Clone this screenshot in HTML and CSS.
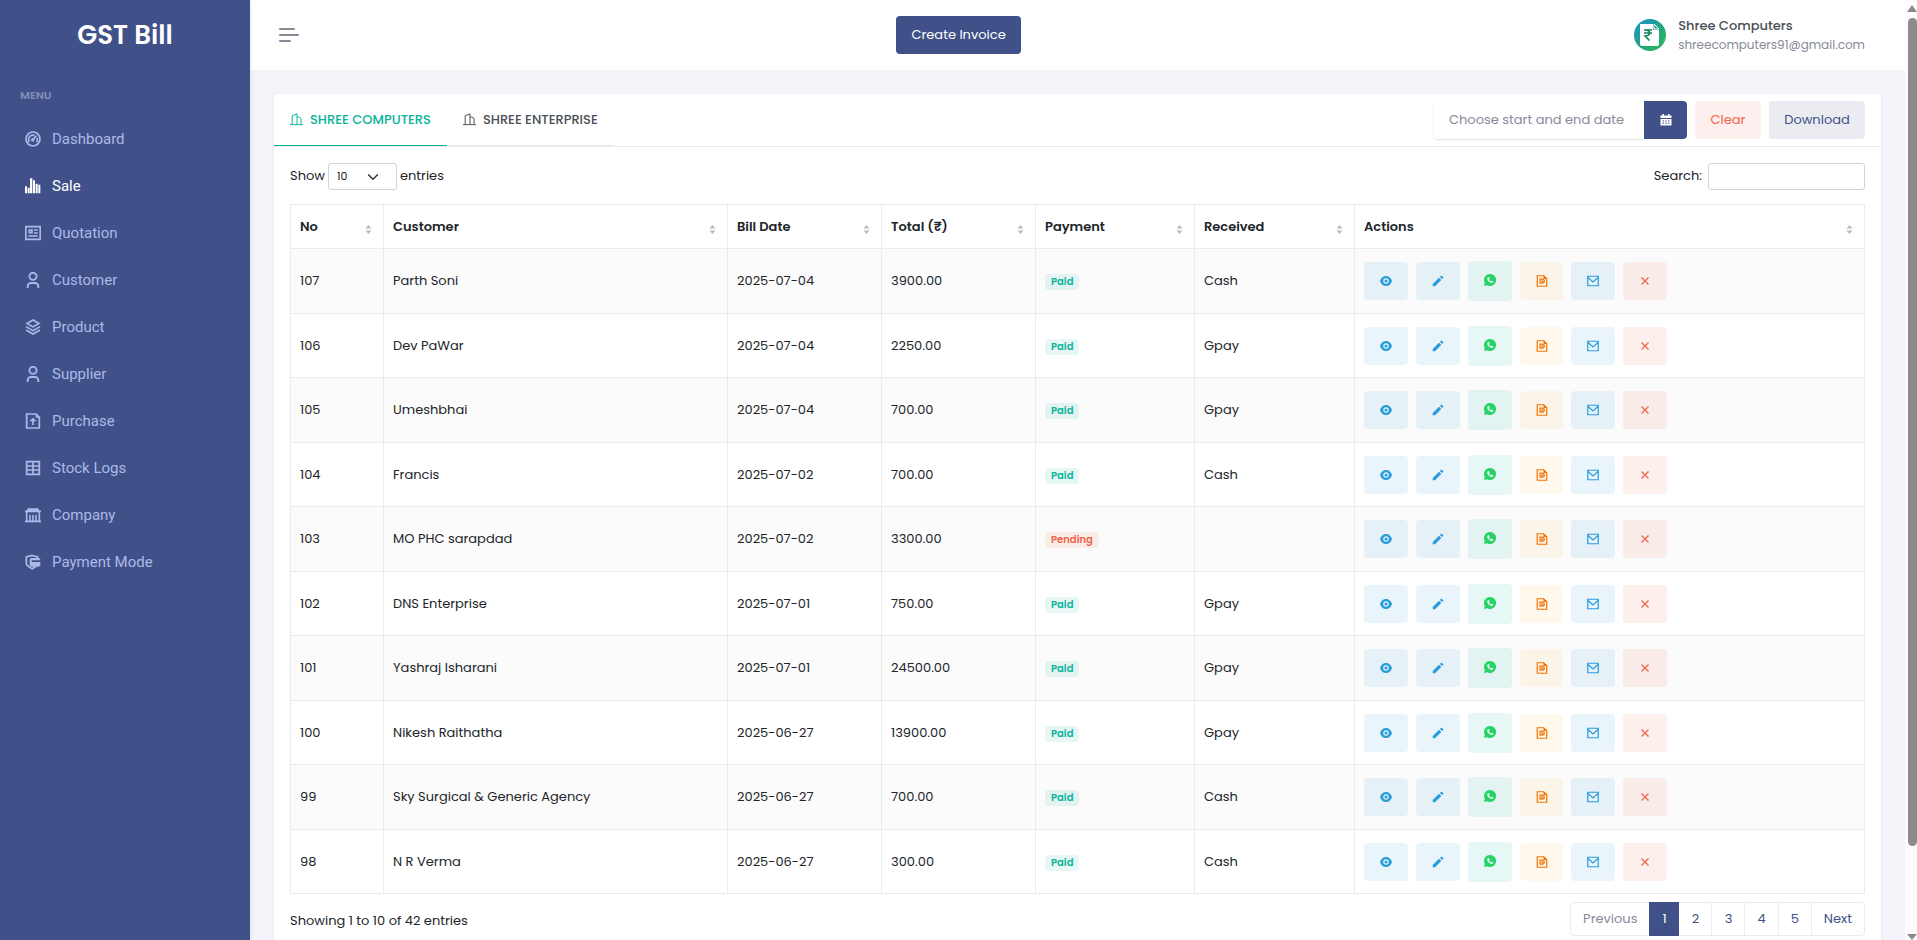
FILE: index.html
```html
<!DOCTYPE html>
<html lang="en">
<head>
    <meta charset="UTF-8">
    <title>GST Bill</title>
    <link rel="stylesheet" href="styles.css">
</head>
<body>
    <!-- icons -->
    <svg class="sprite">
        <symbol id="dashboard" viewBox="0 0 24 24"><g fill="none" stroke="currentColor" stroke-width="2.600"><circle cx="12" cy="12" r="10.500"/><path d="M6.500 16.500a7 7 0 0 1-1-4.500 6.500 6.500 0 0 1 8.500-5.500M18.300 10a7 7 0 0 1-1 6.500"/><path d="M11.500 13.500L17 7"/></g><circle cx="11.500" cy="13.500" r="2.500" fill="currentColor"/></symbol>
        <symbol id="sale" viewBox="0 0 48 48"><path fill="currentColor" d="M0 25h6v21H0zM8 29h6v17H8zM15 1h7v45h-7zM24 7h6v39h-6zM32 17h6v29h-6zM40 20h6v26h-6z"/></symbol>
        <symbol id="quotation" viewBox="0 0 24 24"><g fill="none" stroke="currentColor" stroke-width="2.500"><path d="M1.200 2.500h21.600v19H1.200z"/><path d="M6.500 7.500h4v4h-4zM5 16.500h14M13.500 7.500H19M13.500 12H19"/></g></symbol>
        <symbol id="user" viewBox="0 0 24 24"><g fill="none" stroke="currentColor" stroke-width="2.800"><circle cx="12" cy="6.500" r="5.400"/><path d="M4 24v-2.500a5 5 0 0 1 5-5h6a5 5 0 0 1 5 5V24"/></g></symbol>
        <symbol id="product" viewBox="0 0 24 24"><g fill="none" stroke="currentColor" stroke-width="2.400"><path d="M12 1.500l9 5.200-9 5.200-9-5.200z"/><path d="M1.500 11.500L12 17.500l10.500-6M1.500 16.500L12 22.500l10.500-6"/></g></symbol>
        <symbol id="purchase" viewBox="0 0 24 24"><path fill="none" stroke="currentColor" stroke-width="2.600" d="M2.500 1.500h14l5 5v16h-19zM12 18v-7"/><path fill="currentColor" d="M12 7l5.500 5.500h-11zM16 1v6h6z"/></symbol>
        <symbol id="stock" viewBox="0 0 24 24"><path fill="none" stroke="currentColor" stroke-width="2.600" d="M2.500 2.500h19v19h-19zM2 9h20M2 15h20M12 3v18"/></symbol>
        <symbol id="company" viewBox="0 0 24 24"><path fill="none" stroke="currentColor" stroke-width="2.400" d="M0 21.500h24M2.500 6v15M21.500 6v15M7.500 12v9M12 12v9M16.500 12v9M0 6.500h24"/><path fill="currentColor" d="M4 2h16l2 5H2z"/></symbol>
        <symbol id="payment" viewBox="0 0 24 24"><path fill="none" stroke="currentColor" stroke-width="2.600" d="M19 6V4.500L10.500 2 2 4.500V14c0 4 4 5.500 8.500 8 2-1 4-2 6-3.500"/><path fill="currentColor" d="M9 6h12l2 2v1.500H10V12h13v5l-2 2H9l-2-2V8z"/></symbol>
        <symbol id="building" viewBox="0 0 24 24"><path fill="none" stroke="currentColor" stroke-width="1.800" d="M0 21.500h24M4 21V5l9-3.500V21M13 7.500h3L20.500 10v11"/></symbol>
        <symbol id="calendar" viewBox="0 0 24 24"><path fill="currentColor" d="M5 0h3v3h8V0h3v3h4v5H1V3h4zM1 10h22v13H1zm4 3v2h3v-2zm5.500 0v2h3v-2zm5.500 0v2h3v-2zM5 17.500v2h3v-2zm5.500 0v2h3v-2zm5.500 0v2h3v-2z" fill-rule="evenodd"/></symbol>
        <symbol id="eye" viewBox="0 0 24 24"><path fill="currentColor" fill-rule="evenodd" d="M12 2c5.500 0 10.500 4 12 10-1.500 6-6.500 10-12 10S1.500 18 0 12C1.500 6 6.500 2 12 2zm0 4.500a5.500 5.500 0 1 0 0 11 5.500 5.500 0 0 0 0-11zm0 2.500a3 3 0 1 1 0 6 3 3 0 0 1 0-6z"/></symbol>
        <symbol id="pencil" viewBox="0 0 24 24"><path fill="currentColor" d="M14 5.500L18.500 10 6 22.500H1.500V18zM15.800 3.800L19 .8 23.200 5l-3 3.200z"/></symbol>
        <symbol id="whatsapp" viewBox="0 0 24 24"><path fill="#25d366" d="M12 0a12 12 0 1 1-5.700 22.500L0 24l1.600-6A12 12 0 0 1 12 0z"/><path fill="#e2f4f1" d="M8 6.200l1.900-.2 1.500 3.600-1.200 1.700c.8 1.500 2 2.600 3.600 3.300l1.600-1.500 3.300 1.700c.1 2-1.600 3.200-3.300 3.200-4.700-.5-8.700-4.500-9-8.500 0-1.500.7-2.700 1.600-3.300z"/></symbol>
        <symbol id="bill" viewBox="0 0 24 24"><g fill="none" stroke="currentColor" stroke-width="2.400"><path d="M2.500 1.500h13l6 6v15h-19z"/><path d="M8 8.200h4.500a4 4 0 0 1 0 8H8z"/></g><path fill="currentColor" d="M15 1v7h7zM10.500 11h3.500v3h-3.500z"/></symbol>
        <symbol id="mail" viewBox="0 0 24 24"><path fill="none" stroke="currentColor" stroke-width="2.400" d="M1.500 2.500h21v19h-21zM2 5l10 9L22 5"/></symbol>
        <symbol id="cross" viewBox="0 0 24 24"><path fill="none" stroke="currentColor" stroke-width="2.600" d="M5 5l14 14M19 5L5 19"/></symbol>
    </svg>

    <nav class="sidebar">
        <a class="logo" href="#">GST Bill</a>
        <div class="menu-title">MENU</div>
        <a class="menu-link" href="#"><svg><use href="#dashboard"/></svg>Dashboard</a>
        <a class="menu-link active" href="#"><svg><use href="#sale"/></svg>Sale</a>
        <a class="menu-link" href="#"><svg><use href="#quotation"/></svg>Quotation</a>
        <a class="menu-link" href="#"><svg><use href="#user"/></svg>Customer</a>
        <a class="menu-link" href="#"><svg><use href="#product"/></svg>Product</a>
        <a class="menu-link" href="#"><svg><use href="#user"/></svg>Supplier</a>
        <a class="menu-link" href="#"><svg><use href="#purchase"/></svg>Purchase</a>
        <a class="menu-link" href="#"><svg><use href="#stock"/></svg>Stock Logs</a>
        <a class="menu-link" href="#"><svg><use href="#company"/></svg>Company</a>
        <a class="menu-link" href="#"><svg><use href="#payment"/></svg>Payment Mode</a>
    </nav>

    <div class="main">
        <header class="topbar">
            <button class="hamburger" aria-label="Toggle menu"><span></span><span></span><span></span></button>
            <button class="btn btn-primary">Create Invoice</button>
            <div class="user">
                <svg class="avatar" viewBox="0 0 32 32">
                    <defs>
                        <linearGradient id="avatar-bg" x1="0" y1="0" x2="1" y2="1">
                            <stop offset="0.1" stop-color="#1b93c9"/>
                            <stop offset="0.6" stop-color="#22a878"/>
                            <stop offset="1" stop-color="#2fbf55"/>
                        </linearGradient>
                    </defs>
                    <circle cx="16" cy="16" r="16" fill="url(#avatar-bg)"/>
                    <path fill="#fff" d="M7 5h12v6h6v14q0 2-2 2H8q-2 0-2-2V6q0-1 1-1z"/>
                    <path fill="none" stroke="#fff" d="M20 5v5h5z"/>
                    <path fill="none" stroke="#12805c" stroke-width="1.600" d="M10 11h8M10 14h8M11 11c6 0 6 6 0 6l4.500 4.500"/>
                </svg>
                <div class="user-text">
                    <div class="user-name">Shree Computers</div>
                    <div class="user-mail">shreecomputers91@gmail.com</div>
                </div>
            </div>
        </header>

        <div class="card">
            <div class="card-header">
                <div class="tabs">
                    <a class="tab active" href="#"><svg><use href="#building"/></svg>SHREE COMPUTERS</a>
                    <a class="tab" href="#"><svg><use href="#building"/></svg>SHREE ENTERPRISE</a>
                </div>
                <div class="tools">
                    <div class="date-group">
                        <input type="text" class="date-input" placeholder="Choose start and end date" aria-label="Date range">
                        <button class="date-btn" aria-label="Open calendar"><svg><use href="#calendar"/></svg></button>
                    </div>
                    <button class="btn btn-clear">Clear</button>
                    <button class="btn btn-download">Download</button>
                </div>
            </div>

            <div class="card-body">
                <div class="table-top">
                    <label>Show
                        <select class="length">
                            <option>10</option>
                            <option>25</option>
                            <option>50</option>
                        </select>
                        entries</label>
                    <label class="search">Search: <input type="search"></label>
                </div>

                <table>
                    <colgroup>
                        <col class="col-no"><col class="col-customer"><col class="col-date"><col class="col-total">
                        <col class="col-payment"><col class="col-received"><col>
                    </colgroup>
                    <thead>
                        <tr>
                            <th>No</th>
                            <th>Customer</th>
                            <th>Bill Date</th>
                            <th>Total (₹)</th>
                            <th>Payment</th>
                            <th>Received</th>
                            <th>Actions</th>
                        </tr>
                    </thead>
                    <tbody id="bills"></tbody>
                </table>

                <div class="table-bottom">
                    <div class="showing">Showing 1 to 10 of 42 entries</div>
                    <div class="pagination">
                        <a class="disabled" href="#">Previous</a>
                        <a class="active" href="#">1</a>
                        <a href="#">2</a>
                        <a href="#">3</a>
                        <a href="#">4</a>
                        <a href="#">5</a>
                        <a href="#">Next</a>
                    </div>
                </div>
            </div>
        </div>
    </div>

    <div class="scrollbar">
        <div class="arrow-up"></div>
        <div class="thumb"></div>
        <div class="arrow-down"></div>
    </div>

    <script>
        var bills = [
            [107, 'Parth Soni', '2025-07-04', '3900.00', 'Paid', 'Cash'],
            [106, 'Dev PaWar', '2025-07-04', '2250.00', 'Paid', 'Gpay'],
            [105, 'Umeshbhai', '2025-07-04', '700.00', 'Paid', 'Gpay'],
            [104, 'Francis', '2025-07-02', '700.00', 'Paid', 'Cash'],
            [103, 'MO PHC sarapdad', '2025-07-02', '3300.00', 'Pending', ''],
            [102, 'DNS Enterprise', '2025-07-01', '750.00', 'Paid', 'Gpay'],
            [101, 'Yashraj Isharani', '2025-07-01', '24500.00', 'Paid', 'Gpay'],
            [100, 'Nikesh Raithatha', '2025-06-27', '13900.00', 'Paid', 'Gpay'],
            [99, 'Sky Surgical &amp; Generic Agency', '2025-06-27', '700.00', 'Paid', 'Cash'],
            [98, 'N R Verma', '2025-06-27', '300.00', 'Paid', 'Cash']
        ];
        // icon, colour class, label
        var actions = [
            ['eye', 'info', 'View'],
            ['pencil', 'info', 'Edit'],
            ['whatsapp', 'success', 'WhatsApp'],
            ['bill', 'warning', 'Bill'],
            ['mail', 'info', 'Email'],
            ['cross', 'danger', 'Delete']
        ];

        var buttons = actions.map(function(a) {
            return '<button class="action ' + a[1] + '" aria-label="' + a[2] + '"><svg><use href="#' + a[0] + '"/></svg></button>';
        }).join('');

        document.getElementById('bills').innerHTML = bills.map(function(b) {
            var badge = '<span class="badge ' + b[4].toLowerCase() + '">' + b[4] + '</span>';
            return '<tr><td>' + b[0] + '</td><td>' + b[1] + '</td><td>' + b[2] + '</td><td>' + b[3] + '</td><td>' +
                badge + '</td><td>' + b[5] + '</td><td><div class="actions">' + buttons + '</div></td></tr>';
        }).join('');
    </script>
</body>
</html>
```
FILE: styles.css
```css
* {
    box-sizing: border-box;
}
body {
    display: flex;
    height: 100vh;
    margin: 0;
    overflow: hidden;
    background-color: #f3f3f9;
    color: #212529;
    font-family: Poppins, Inter, "Liberation Sans", sans-serif;
    font-size: 13px;
    line-height: 20px;
}
a {
    color: inherit;
    text-decoration: none;
}
button, input, select {
    font: inherit;
}
button {
    cursor: pointer;
}
.sprite {
    position: absolute;
    width: 0;
    height: 0;
}

/* sidebar */
.sidebar {
    flex: 0 0 250px;
    background-color: #405189;
    color: #abb9e8;
    box-shadow: 0 2px 4px rgba(15, 34, 58, 0.12);
    z-index: 1;
}
.logo {
    display: block;
    padding-top: 15px;
    height: 80px;
    color: #fff;
    font-size: 26px;
    font-weight: 600;
    line-height: 40px;
    text-align: center;
}
.menu-title {
    height: 35px;
    padding: 5px 20px;
    color: #838fb9;
    font-size: 11px;
    font-weight: 600;
}
.menu-link {
    display: flex;
    align-items: center;
    height: 47px;
    padding-left: 25px;
    font-family: "HK Grotesk", Roboto, sans-serif;
    font-size: 15px;
}
.menu-link svg {
    width: 16px;
    height: 16px;
    margin-right: 11px;
}
.menu-link.active {
    color: #fff;
}

/* top bar */
.main {
    flex: 1;
    min-width: 0;
}
.topbar {
    display: flex;
    align-items: center;
    justify-content: space-between;
    height: 70px;
    padding: 0 24px 0 29px;
    background-color: #fff;
}
.hamburger {
    display: flex;
    flex-direction: column;
    gap: 4px;
    padding: 0;
    border: none;
    background: none;
}
.hamburger span {
    width: 16px;
    height: 2px;
    border-radius: 1px;
    background-color: #878a99;
}
.hamburger span:nth-child(2) {
    width: 20px;
}
.hamburger span:nth-child(3) {
    width: 12px;
}
.btn {
    height: 38px;
    padding: 0 15px;
    border: none;
    border-radius: 4px;
}
.btn-primary {
    min-width: 125px;
    background-color: #405189;
    color: #fff;
}
.btn-clear {
    min-width: 66px;
    background-color: #fdefed;
    color: #f06548;
}
.btn-download {
    min-width: 96px;
    background-color: #ebecf2;
    color: #405189;
}
.user {
    display: flex;
    align-items: center;
    gap: 12px;
    padding: 0 16px;
}
.avatar {
    width: 32px;
    height: 32px;
}
.user-text {
    min-width: 186px;
}
.user-name {
    color: #495057;
    font-weight: 500;
}
.user-mail {
    color: #878a99;
    font-size: 12px;
    line-height: 18px;
}

/* card */
.card {
    margin: 24px;
    min-height: 100vh;
    border-radius: 4px;
    background-color: #fff;
    box-shadow: 0 1px 2px rgba(56, 65, 74, 0.15);
}
.card-header {
    display: flex;
    justify-content: space-between;
    height: 53px;
    border-bottom: 1px solid #e9ebec;
}
.tabs {
    display: flex;
}
.tab {
    display: flex;
    align-items: center;
    min-width: 167px;
    padding: 0 16px;
    border-bottom: 1px solid #e9ebec;
    color: #495057;
    font-weight: 500;
}
.tab svg {
    width: 13px;
    height: 13px;
    margin-right: 7px;
}
.tab.active {
    border-bottom-color: #0ab39c;
    color: #0ab39c;
}
.tools {
    display: flex;
    align-items: center;
    gap: 8px;
    padding-right: 16px;
}
.date-group {
    display: flex;
}
.date-input {
    width: 210px;
    height: 38px;
    padding: 0 15px;
    border: none;
    border-radius: 4px 0 0 4px;
    box-shadow: 0 1px 2px rgba(56, 65, 74, 0.15);
}
.date-input::placeholder {
    color: #878a99;
}
.date-btn {
    width: 43px;
    height: 38px;
    padding: 0;
    border: none;
    border-radius: 0 4px 4px 0;
    background-color: #405189;
    color: #fff;
}
.date-btn svg {
    display: block;
    width: 12px;
    height: 12px;
    margin: 0 auto;
}
.card-body {
    padding: 16px;
}

/* table */
.table-top {
    display: flex;
    justify-content: space-between;
    margin-bottom: 14px;
}
.table-top label {
    display: flex;
    align-items: flex-start;
    gap: 3px;
    line-height: 25px;
}
.length {
    appearance: none;
    width: 69px;
    height: 27px;
    padding: 0 8px;
    border: 1px solid #ced4da;
    border-radius: 3px;
    background: #fff url("data:image/svg+xml,%3csvg xmlns='http://www.w3.org/2000/svg' viewBox='0 0 16 16'%3e%3cpath fill='none' stroke='%23343a40' stroke-width='2' stroke-linecap='round' stroke-linejoin='round' d='M2 5l6 6 6-6'/%3e%3c/svg%3e") no-repeat right 17px center / 12px 12px;
    color: #212529;
    font-size: 11px;
}
.table-top .search {
    gap: 6px;
}
.search input {
    width: 157px;
    height: 27px;
    border: 1px solid #ced4da;
    border-radius: 3px;
}
table {
    width: 100%;
    table-layout: fixed;
    border-collapse: collapse;
}
.col-no {
    width: 93px;
}
.col-customer {
    width: 344px;
}
.col-date, .col-total {
    width: 154px;
}
.col-payment {
    width: 159px;
}
.col-received {
    width: 160px;
}
th, td {
    padding: 0 9px;
    border: 1px solid #e9ebec;
    text-align: left;
}
th {
    height: 44px;
    font-weight: 600;
    background: url("data:image/svg+xml,%3csvg xmlns='http://www.w3.org/2000/svg' viewBox='0 0 6 9'%3e%3cpath fill='%23b8babd' d='M3 0l3 3.500H0zM3 9l3-3.500H0z'/%3e%3c/svg%3e") no-repeat right 11px top 20px / 7px 9px;
}
td {
    height: 64px;
}
tbody tr:nth-child(odd) {
    background-color: #fbfbfb;
}
tbody tr:nth-child(odd) td {
    height: 65px;
}
.badge {
    display: inline-block;
    margin-top: 2px;
    padding: 0 6px;
    border-radius: 4px;
    background-color: rgba(10, 179, 156, 0.1);
    color: #0ab39c;
    font-size: 10px;
    font-weight: 600;
    line-height: 16px;
    vertical-align: middle;
}
.badge.pending {
    background-color: rgba(240, 101, 72, 0.1);
    color: #f06548;
}
.actions {
    display: flex;
    align-items: center;
    gap: 8px;
}
.action {
    display: flex;
    align-items: center;
    justify-content: center;
    width: 44px;
    height: 38px;
    padding: 0;
    border: none;
    border-radius: 4px;
}
.action svg {
    width: 12px;
    height: 12px;
}
.info {
    background-color: rgba(41, 156, 219, 0.1);
    color: #299cdb;
}
.success {
    height: 40px;
    padding-bottom: 2px;
    background-color: rgba(10, 179, 156, 0.1);
}
.warning {
    width: 43px;
    background-color: rgba(247, 184, 75, 0.1);
    color: #f37100;
}
.danger {
    background-color: rgba(240, 101, 72, 0.1);
    color: #f06548;
}

/* pagination */
.table-bottom {
    display: flex;
    align-items: center;
    justify-content: space-between;
    margin-top: 8px;
}
.showing {
    padding-top: 4px;
}
.pagination {
    display: flex;
    border: 1px solid #e9ebec;
    border-radius: 4px;
    color: #405189;
}
.pagination a {
    min-width: 33px;
    padding: 6px 12px;
    border-left: 1px solid #e9ebec;
    text-align: center;
}
.pagination a:first-child {
    border-left: none;
}
.pagination .disabled {
    color: #878a99;
}
.pagination .active {
    min-width: 30px;
    margin: -1px 0;
    padding: 7px 11px;
    border: none;
    background-color: #405189;
    color: #fff;
}
.pagination .active + a {
    min-width: 32px;
    padding: 6px 11px;
    border-left: none;
}

/* scrollbar */
.scrollbar {
    display: flex;
    flex-direction: column;
    align-items: center;
    width: 12px;
    padding: 5px 0 0 2px;
    background-color: #fcfcfc;
}
.arrow-up, .arrow-down {
    border: 5px solid transparent;
    border-top-width: 0;
    border-bottom: 7px solid #8b8b8b;
}
.arrow-down {
    margin-top: auto;
    border-top: 6px solid #8b8b8b;
    border-bottom-width: 0;
}
.thumb {
    flex: 0 1 828px;
    width: 9px;
    margin-top: 6px;
    border-radius: 5px;
    background-color: #8b8b8b;
}
```
